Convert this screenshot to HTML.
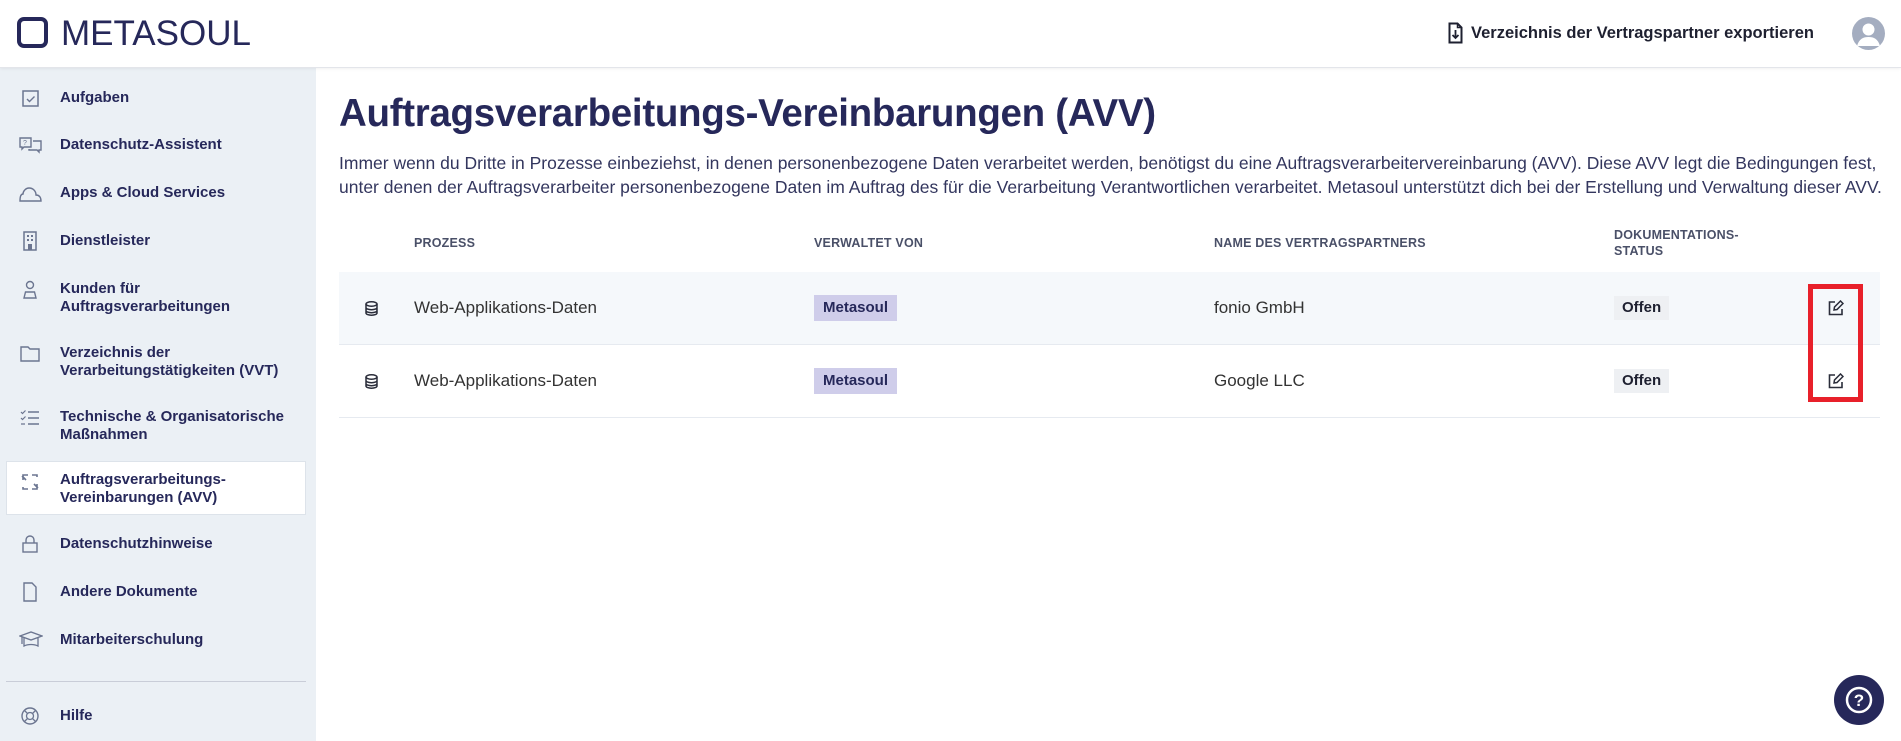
<!DOCTYPE html>
<html><head><meta charset="utf-8">
<style>
*{box-sizing:border-box;margin:0;padding:0}
body{width:1901px;height:741px;overflow:hidden;background:#fff;font-family:"Liberation Sans",sans-serif;position:relative;color:#26285a}
.hdr{position:absolute;left:0;top:0;width:1901px;height:68px;background:#fff;border-bottom:1px solid #e3e5ea;box-shadow:0 1px 3px rgba(0,0,0,.06);z-index:2}
.logo-sq{position:absolute;left:17px;top:17px;width:31px;height:31px;border:4px solid #26285a;border-radius:7px}
.logo-t{position:absolute;left:61px;top:14px;font-size:35px;color:#26285a}
.exp{position:absolute;left:1448px;top:22px}
.expt{position:absolute;left:1471px;top:24px;font-size:16.5px;font-weight:bold;color:#1e2030}
.av{position:absolute;left:1852px;top:17px;width:33px;height:33px;border-radius:50%;background:#a4adc0;overflow:hidden}
.side{position:absolute;left:0;top:68px;width:316px;height:673px;background:#ebf0f5}
.it{position:absolute;left:60px;font-size:15px;font-weight:bold;color:#26285a;line-height:18px}
.ic{position:absolute;left:19px}
.act{position:absolute;left:6px;top:461px;width:300px;height:54px;background:#fff;border:1px solid #dde3ea}
.div{position:absolute;left:6px;top:681px;width:300px;height:1px;background:#c9cdd8}
h1{position:absolute;left:339px;top:92px;font-size:38.5px;font-weight:bold;color:#26285a;letter-spacing:-0.3px;white-space:nowrap}
.p{position:absolute;left:339px;top:151px;font-size:17.5px;line-height:24px;color:#33365e;white-space:nowrap;letter-spacing:0}
.th{position:absolute;font-size:12.5px;font-weight:bold;color:#4a5068;letter-spacing:0.2px;line-height:16px}
.row{position:absolute;left:339px;width:1541px;height:73px;border-bottom:1px solid #e6eaf0}
.cell{position:absolute;font-size:17px;color:#333}
.bm{position:absolute;left:475px;top:23px;height:26px;padding:0 9px;background:#cfcdea;font-size:15px;font-weight:bold;color:#26285a;line-height:26px;white-space:nowrap}
.bo{position:absolute;left:1275px;top:24px;height:24px;padding:0 8px;background:#eef0f3;font-size:15px;font-weight:bold;color:#1e2030;line-height:24px}
.red{position:absolute;left:1808px;top:284px;width:55px;height:118px;border:5px solid #e8202a}
.help{position:absolute;left:1834px;top:675px;width:50px;height:50px;border-radius:50%;background:#26285a}
</style></head><body>
<div class="hdr">
<div class="logo-sq"></div><div class="logo-t">METASOUL</div>
<svg class="exp" width="15" height="22" viewBox="0 0 15 22"><path d="M1.5 1.5h8l4 4v15h-12z" fill="none" stroke="#1e2030" stroke-width="2"/><path d="M9.5 1.5v4h4" fill="none" stroke="#1e2030" stroke-width="1.5"/><path d="M7.5 8v8M4.5 13l3 3 3-3" fill="none" stroke="#1e2030" stroke-width="1.8"/></svg>
<div class="expt">Verzeichnis der Vertragspartner exportieren</div>
<div class="av"><svg width="33" height="33" viewBox="0 0 33 33"><circle cx="16.5" cy="12.5" r="6" fill="#fff"/><path d="M5 29c2-7 6-9 11.5-9s9.5 2 11.5 9z" fill="#fff"/></svg></div>
</div>
<div class="side"></div>
<div class="act"></div>
<div class="div"></div>
<svg class="ic" style="top:89px" width="22" height="20" viewBox="0 0 22 20"><rect x="4" y="2" width="15" height="15" fill="none" stroke="#6b7590" stroke-width="1.5"/><path d="M8 10l2.5 2.5 5-5" fill="none" stroke="#6b7590" stroke-width="1.4"/></svg>
<div class="it" style="top:89px">Aufgaben</div>
<svg class="ic" style="top:136px" width="24" height="20" viewBox="0 0 24 20"><path d="M1 2h11v9H5l-2 2v-2H1z" fill="none" stroke="#6b7590" stroke-width="1.4"/><path d="M14 5h8v9h-2v2l-2-2h-8v-1" fill="none" stroke="#6b7590" stroke-width="1.4"/><text x="4" y="9" font-size="7" fill="#6b7590" font-family="Liberation Sans">?</text></svg>
<div class="it" style="top:136px">Datenschutz-Assistent</div>
<svg class="ic" style="top:184px" width="24" height="20" viewBox="0 0 24 20"><path d="M1 17h21c0-4-2-6-5-6 0-4-3-7-7-7-3 0-6 3-6 6-2 0-3 3-3 7z" fill="none" stroke="#6b7590" stroke-width="1.4"/></svg>
<div class="it" style="top:184px">Apps &amp; Cloud Services</div>
<svg class="ic" style="top:231px" width="22" height="20" viewBox="0 0 22 20"><rect x="5" y="1" width="12" height="18" fill="none" stroke="#6b7590" stroke-width="1.5"/><rect x="8" y="4" width="2" height="2" fill="#6b7590"/><rect x="12" y="4" width="2" height="2" fill="#6b7590"/><rect x="8" y="8" width="2" height="2" fill="#6b7590"/><rect x="12" y="8" width="2" height="2" fill="#6b7590"/><rect x="9" y="13" width="4" height="6" fill="#6b7590"/></svg>
<div class="it" style="top:232px">Dienstleister</div>
<svg class="ic" style="top:280px" width="22" height="20" viewBox="0 0 22 20"><circle cx="11" cy="5" r="3.5" fill="none" stroke="#6b7590" stroke-width="1.4"/><path d="M5 18l1.5-6h9l1.5 6z" fill="none" stroke="#6b7590" stroke-width="1.4"/></svg>
<div class="it" style="top:280px">Kunden für<br>Auftragsverarbeitungen</div>
<svg class="ic" style="top:344px" width="22" height="20" viewBox="0 0 22 20"><path d="M2 3h7l2 2h9v12H2z" fill="none" stroke="#6b7590" stroke-width="1.4"/></svg>
<div class="it" style="top:344px">Verzeichnis der<br>Verarbeitungstätigkeiten (VVT)</div>
<svg class="ic" style="top:408px" width="22" height="20" viewBox="0 0 22 20"><path d="M9 4h11M9 10h11M9 16h11" stroke="#6b7590" stroke-width="1.4"/><path d="M2 4l1.5 1.5 3-3M2 10l1.5 1.5 3-3M2 16h4" fill="none" stroke="#6b7590" stroke-width="1.2"/></svg>
<div class="it" style="top:408px">Technische &amp; Organisatorische<br>Maßnahmen</div>
<svg class="ic" style="top:472px" width="22" height="20" viewBox="0 0 22 20"><path d="M4 8V3h5M3 4l4 4M18 12v5h-5M19 16l-4-4M13 3h5v2M4 15v2h5" fill="none" stroke="#6b7590" stroke-width="1.6"/></svg>
<div class="it" style="top:471px">Auftragsverarbeitungs-<br>Vereinbarungen (AVV)</div>
<svg class="ic" style="top:534px" width="22" height="20" viewBox="0 0 22 20"><path d="M7 9V6a4 4 0 0 1 8 0v3" fill="none" stroke="#6b7590" stroke-width="1.4"/><rect x="4" y="9" width="14" height="9" fill="none" stroke="#6b7590" stroke-width="1.4"/></svg>
<div class="it" style="top:535px">Datenschutzhinweise</div>
<svg class="ic" style="top:582px" width="22" height="20" viewBox="0 0 22 20"><path d="M5 1h8l4 4v14H5z" fill="none" stroke="#6b7590" stroke-width="1.4"/></svg>
<div class="it" style="top:583px">Andere Dokumente</div>
<svg class="ic" style="top:630px" width="24" height="20" viewBox="0 0 24 20"><path d="M1 6l11-4 11 4-11 4z" fill="none" stroke="#6b7590" stroke-width="1.3"/><path d="M5 8v8c4-2 10-2 14 0V8M3 7v7" fill="none" stroke="#6b7590" stroke-width="1.3"/></svg>
<div class="it" style="top:631px">Mitarbeiterschulung</div>
<svg class="ic" style="top:706px" width="22" height="20" viewBox="0 0 22 20"><circle cx="11" cy="10" r="8" fill="none" stroke="#6b7590" stroke-width="1.4"/><circle cx="11" cy="10" r="3.5" fill="none" stroke="#6b7590" stroke-width="1.3"/><path d="M5.5 4.5l3 3M16.5 4.5l-3 3M5.5 15.5l3-3M16.5 15.5l-3-3" stroke="#6b7590" stroke-width="1.3"/></svg>
<div class="it" style="top:707px">Hilfe</div>

<h1>Auftragsverarbeitungs-Vereinbarungen (AVV)</h1>
<div class="p">Immer wenn du Dritte in Prozesse einbeziehst, in denen personenbezogene Daten verarbeitet werden, benötigst du eine Auftragsverarbeitervereinbarung (AVV). Diese AVV legt die Bedingungen fest,<br>unter denen der Auftragsverarbeiter personenbezogene Daten im Auftrag des für die Verarbeitung Verantwortlichen verarbeitet. Metasoul unterstützt dich bei der Erstellung und Verwaltung dieser AVV.</div>

<div class="th" style="left:414px;top:235px">PROZESS</div>
<div class="th" style="left:814px;top:235px">VERWALTET VON</div>
<div class="th" style="left:1214px;top:235px">NAME DES VERTRAGSPARTNERS</div>
<div class="th" style="left:1614px;top:227px">DOKUMENTATIONS-<br>STATUS</div>

<div class="row" style="top:272px;background:#f5f8fb">
<svg style="position:absolute;left:25px;top:29px" width="15" height="15" viewBox="0 0 15 15"><ellipse cx="7.5" cy="3" rx="5.5" ry="2.2" fill="none" stroke="#2a2d3a" stroke-width="1.5"/><path d="M2 3v9c0 1.3 2.5 2.2 5.5 2.2S13 13.3 13 12V3M2 6.5c0 1.3 2.5 2.2 5.5 2.2S13 7.8 13 6.5M2 9.5c0 1.3 2.5 2.2 5.5 2.2S13 10.8 13 9.5" fill="none" stroke="#2a2d3a" stroke-width="1.5"/></svg>
<div class="cell" style="left:75px;top:26px">Web-Applikations-Daten</div>
<div class="bm">Metasoul</div>
<div class="cell" style="left:875px;top:26px">fonio GmbH</div>
<div class="bo">Offen</div>
<svg style="position:absolute;left:1489px;top:28px" width="16" height="16" viewBox="0 0 16 16"><path d="M7 2H1.5v12.5H14V9" fill="none" stroke="#2a2d3a" stroke-width="1.6"/><path d="M6 10l.5-3 6-6 2.5 2.5-6 6z" fill="none" stroke="#2a2d3a" stroke-width="1.5"/></svg>
</div>
<div class="row" style="top:345px">
<svg style="position:absolute;left:25px;top:29px" width="15" height="15" viewBox="0 0 15 15"><ellipse cx="7.5" cy="3" rx="5.5" ry="2.2" fill="none" stroke="#2a2d3a" stroke-width="1.5"/><path d="M2 3v9c0 1.3 2.5 2.2 5.5 2.2S13 13.3 13 12V3M2 6.5c0 1.3 2.5 2.2 5.5 2.2S13 7.8 13 6.5M2 9.5c0 1.3 2.5 2.2 5.5 2.2S13 10.8 13 9.5" fill="none" stroke="#2a2d3a" stroke-width="1.5"/></svg>
<div class="cell" style="left:75px;top:26px">Web-Applikations-Daten</div>
<div class="bm">Metasoul</div>
<div class="cell" style="left:875px;top:26px">Google LLC</div>
<div class="bo">Offen</div>
<svg style="position:absolute;left:1489px;top:28px" width="16" height="16" viewBox="0 0 16 16"><path d="M7 2H1.5v12.5H14V9" fill="none" stroke="#2a2d3a" stroke-width="1.6"/><path d="M6 10l.5-3 6-6 2.5 2.5-6 6z" fill="none" stroke="#2a2d3a" stroke-width="1.5"/></svg>
</div>
<div class="red"></div>

<div class="help"><svg width="50" height="50" viewBox="0 0 50 50"><circle cx="25" cy="25" r="12" fill="none" stroke="#fff" stroke-width="2.5"/><text x="25" y="31" text-anchor="middle" font-size="17" font-weight="bold" fill="#fff" font-family="Liberation Sans">?</text></svg></div>
</body></html>
